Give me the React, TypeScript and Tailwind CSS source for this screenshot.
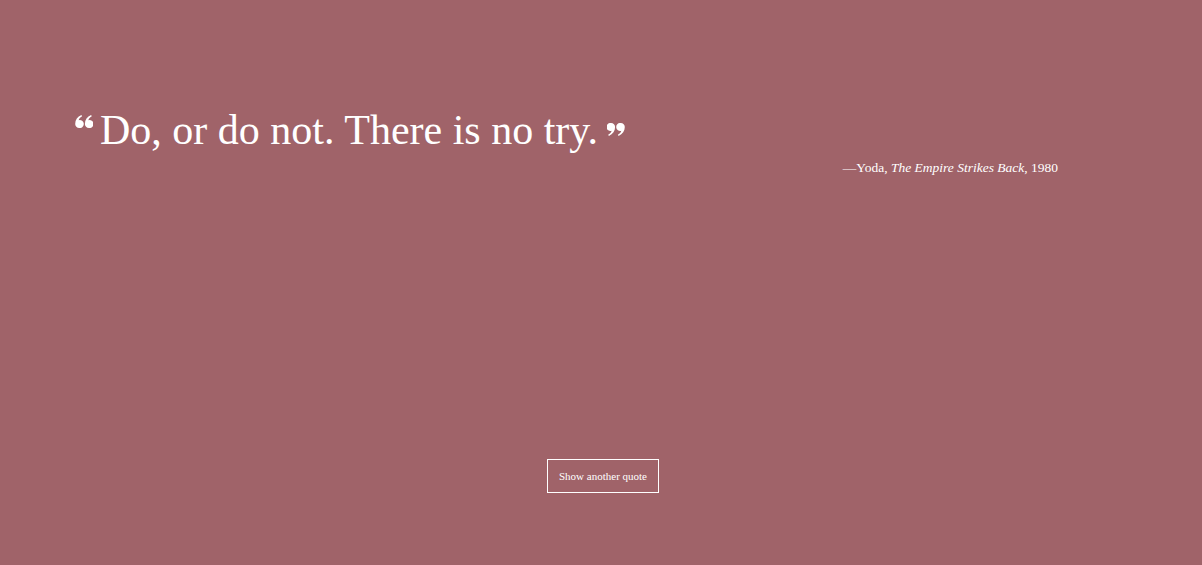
function QuoteMark({ close = false }: { close?: boolean }) {
  return (
    <svg viewBox="0 0 18 13" className={`w-[18px] h-[13px] shrink-0 ${close ? 'rotate-180' : ''}`} fill="currentColor">
      <path d="M4.2 13a4 4 0 0 1-4-4.1C.2 4.9 2.4 1.8 6.4 0l.7 1.2C4.9 2.5 3.9 3.8 3.7 5.2a4 4 0 1 1 .5 7.8z" />
      <path d="M13.9 13a4 4 0 0 1-4-4.1c0-4 2.2-7.1 6.2-8.9l.7 1.2c-2.2 1.3-3.2 2.6-3.4 4a4 4 0 1 1 .5 7.8z" />
    </svg>
  );
}

function App() {
  return (
    <div className="min-h-screen w-full bg-[#a06369] text-white flex flex-col" style={{ fontFamily: '"Liberation Serif", "DejaVu Serif", serif' }}>
      <main className="pt-[107px] pl-[75px] w-[1058px]">
        <blockquote className="flex items-start">
          <span className="mt-[8px] mr-[7px]"><QuoteMark /></span>
          <p className="text-[42px] leading-[46px]">Do, or do not. There is no try.</p>
          <span className="mt-[16px] ml-[9px]"><QuoteMark close /></span>
        </blockquote>
        <p className="text-right text-[13.5px] leading-[20px] mt-[5px]">
          —Yoda, <cite className="italic">The Empire Strikes Back</cite>, 1980
        </p>
      </main>
      <div className="flex justify-center mt-[281px]">
        <button className="border border-white w-[112px] h-[34px] text-[11px] text-white ml-[4px]">
          Show another quote
        </button>
      </div>
    </div>
  );
}

export default App;
